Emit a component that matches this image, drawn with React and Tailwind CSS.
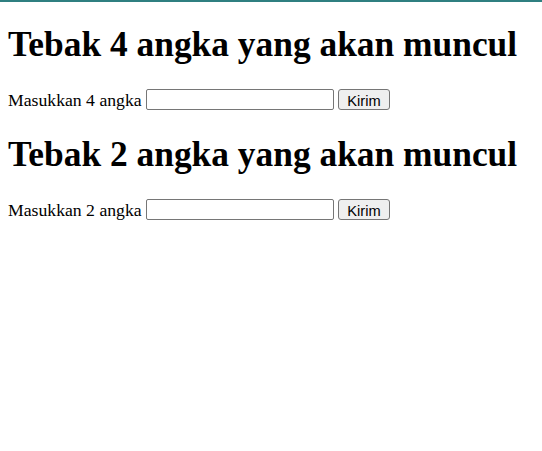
const Guess = ({count}) => (
  <div>
    <h1 className="text-[35.4px] font-bold leading-[40px] mt-[22px] mb-[24px]">
      Tebak {count} angka yang akan muncul
    </h1>
    <form className="flex items-end h-[22px] mb-[24px]" onSubmit={(e) => e.preventDefault()}>
      <label className="self-start text-[17.7px] leading-[20px] mt-[2px]">Masukkan {count} angka&nbsp;</label>
      <input
        type="text"
        className="w-[188px] h-[21px] border border-[#767676] rounded-[2px] px-[2px] text-[14px] outline-none"
      />
      <button
        type="submit"
        className="ml-[4px] h-[21px] w-[52px] bg-[#efefef] border border-[#767676] rounded-[3px] text-[14.67px] text-black"
        style={{fontFamily: '"Liberation Sans", Arial, sans-serif'}}
      >
        Kirim
      </button>
    </form>
  </div>
);

export default function App() {
  return (
    <div
      className="min-h-[451px] bg-white text-black border-t-2 border-[#2f7f80] px-2"
      style={{fontFamily: '"Liberation Serif", "Times New Roman", serif'}}
    >
      <Guess count={4} />
      <Guess count={2} />
    </div>
  );
}
